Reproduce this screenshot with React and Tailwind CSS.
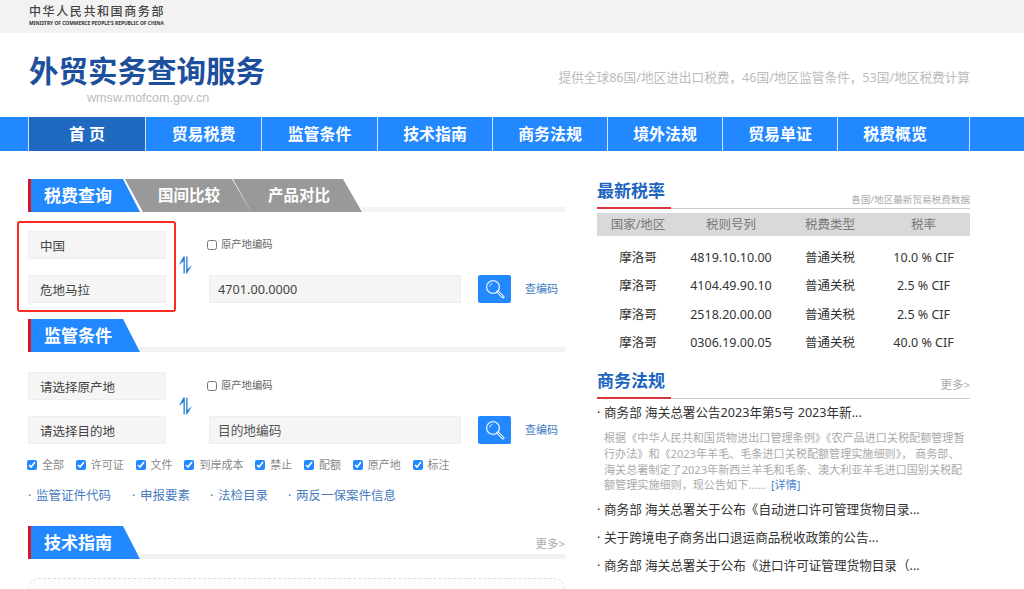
import React from 'react';

const font = { fontFamily: '"Noto Sans", "Noto Sans CJK SC", sans-serif' };

const navItems = [
  ['首 页', 'w-[117px] bg-[#1f69c1]'],
  ['贸易税费', 'w-[116px]'],
  ['监管条件', 'w-[116px]'],
  ['技术指南', 'w-[115px]'],
  ['商务法规', 'w-[115px]'],
  ['境外法规', 'w-[115px]'],
  ['贸易单证', 'w-[115px]'],
  ['税费概览', 'w-[133px] pr-[17px] border-r'],
];

const rates = [
  ['摩洛哥', '4819.10.10.00', '普通关税', '10.0 % CIF'],
  ['摩洛哥', '4104.49.90.10', '普通关税', '2.5 % CIF'],
  ['摩洛哥', '2518.20.00.00', '普通关税', '2.5 % CIF'],
  ['摩洛哥', '0306.19.00.05', '普通关税', '40.0 % CIF'],
];

const checks = ['全部', '许可证', '文件', '到岸成本', '禁止', '配额', '原产地', '标注'];
const links = [
  ['监管证件代码', 'w-[104px]'],
  ['申报要素', 'w-[78px]'],
  ['法检目录', 'w-[78px]'],
  ['两反一保案件信息', ''],
];

function SwapIcon() {
  return (
    <svg width="15" height="18" viewBox="0 0 15 18" fill="#1f7fd0">
      <path d="M5.5 0.5 L6.8 0.5 L6.8 17.5 L5.5 17.5 L5.5 5 L0.8 9 Z" />
      <path d="M8.2 0.5 L9.5 0.5 L9.5 13 L14.2 9 L8.9 17.5 L8.2 17.5 Z" />
    </svg>
  );
}

function SearchIcon() {
  return (
    <svg width="20" height="21" viewBox="0 0 20 21" fill="none" stroke="#dcecff">
      <circle cx="8" cy="8" r="6.4" strokeWidth="1.4" />
      <path d="M4.5 7.5 A3.8 3.8 0 0 1 7.5 4.4" strokeWidth="1" />
      <path d="M12.8 12.8 L18 18" strokeWidth="3" strokeLinecap="round" />
      <path d="M13.2 13.2 L17.6 17.6" strokeWidth="1" stroke="#2288ff" />
    </svg>
  );
}

function BlueTab({ children }) {
  return (
    <div className="w-[112px] h-[33px] border-l-[3px] border-[#d9161c] bg-[#2288ff] [clip-path:polygon(0_0,95px_0,100%_100%,0_100%)] pl-[13px] flex items-center text-[17px] font-bold text-white">
      {children}
    </div>
  );
}

function Band() {
  return <div className="flex-1 h-[5px] bg-[#f2f2f2] self-end" />;
}

function SelectBox({ children }) {
  return (
    <div className="h-[28px] bg-[#f5f5f5] border border-[#eeeeee] pl-[11px] pt-[4px] flex items-center text-[12.5px] text-[#444]">
      {children}
    </div>
  );
}

function QueryForm({ from, to, code, codeColor }) {
  return (
    <div className="grid grid-cols-[138px_43px_252px_17px_33px_14px_auto] grid-rows-[28px_28px] gap-y-[16px]">
      <SelectBox>{from}</SelectBox>
      <div className="row-span-2 flex items-center pl-[12px] pb-[5px]">
        <SwapIcon />
      </div>
      <label className="col-span-5 flex items-center gap-[4px] -ml-[2px] pb-[1px] text-[10.3px] text-[#666]">
        <input type="checkbox" className="w-[10px] h-[10px] m-0" />
        原产地编码
      </label>
      <SelectBox>{to}</SelectBox>
      <div className={`h-[28px] bg-[#f5f5f5] border border-[#eeeeee] pl-[8px] pt-[2px] flex items-center text-[12.7px] ${codeColor}`}>
        {code}
      </div>
      <div />
      <button className="w-[33px] h-[28px] bg-[#2288ff] rounded-[2px] flex items-center justify-center">
        <SearchIcon />
      </button>
      <div />
      <a className="text-[11px] text-[#3b7cc4] self-center">查编码</a>
    </div>
  );
}

function SideTitle({ title, right, rightClass }) {
  return (
    <div className="relative h-[30px] border-b border-[#c5ccd8] flex items-start justify-between">
      <span className="text-[17px] leading-[24px] font-bold text-[#1c66c0]">{title}</span>
      <span className={rightClass}>{right}</span>
      <div className="absolute left-0 -bottom-px w-[74px] h-[2px] bg-[#d9363e]" />
    </div>
  );
}

function NewsItem({ children }) {
  return (
    <div className="flex text-[12.6px] text-[#333] h-[28px] items-center">
      <span className="w-[7px] text-[#333]">·</span>
      <span>{children}</span>
    </div>
  );
}

export default function App() {
  return (
    <div className="h-[589px] w-[1024px] overflow-hidden bg-white" style={font}>
      <div className="h-[33px] bg-[#f2f2f2] pl-[29px] pt-[5px]">
        <div className="text-[12px] leading-[14px] tracking-[1.6px] font-medium text-[#444] whitespace-nowrap">中华人民共和国商务部</div>
        <div className="text-[4.9px] leading-[6px] mt-[1px] font-bold text-[#333] whitespace-nowrap">MINISTRY OF COMMERCE PEOPLE'S REPUBLIC OF CHINA</div>
      </div>

      <div className="h-[84px] pl-[29px] pr-[54px] flex justify-between">
        <div>
          <div className="text-[29.5px] leading-[40px] mt-[18px] font-bold text-[#1c4f9c] whitespace-nowrap">外贸实务查询服务</div>
          <div className="text-[12.6px] leading-[16px] -mt-[1px] ml-[58px] text-[#bbbbbb] font-['Liberation_Sans']">wmsw.mofcom.gov.cn</div>
        </div>
        <div className="text-[12.65px] leading-[18px] mt-[35px] text-[#bbbbbb]">提供全球86国/地区进出口税费，46国/地区监管条件，53国/地区税费计算</div>
      </div>

      <div className="h-[34px] bg-[#2288ff] pl-[28px] flex">
        {navItems.map(([label, cls]) => (
          <div key={label} className={`${cls} h-full border-l border-[#cfe3ff] pt-[2px] flex items-center justify-center text-[15.9px] font-bold text-white`}>
            {label}
          </div>
        ))}
      </div>

      <div className="flex pl-[28px] pt-[28px] gap-[32px]">
        <div className="w-[537px] shrink-0">
          <div className="flex">
            <BlueTab>税费查询</BlueTab>
            <div className="-ml-[15px] w-[126px] h-[33px] bg-[#999999] [clip-path:polygon(0_0,107px_0,100%_100%,18px_100%)] pl-[33px] flex items-center text-[15.5px] font-bold text-white">国间比较</div>
            <div className="-ml-[18px] w-[129px] h-[33px] bg-[#999999] [clip-path:polygon(0_0,110px_0,100%_100%,18px_100%)] pl-[35px] flex items-center text-[15.5px] font-bold text-white">产品对比</div>
            <Band />
          </div>

          <div className="relative mt-[19px]">
            <QueryForm from="中国" to="危地马拉" code="4701.00.0000" codeColor="text-[#444]" />
            <div className="absolute -left-[11px] -top-[10px] w-[159px] h-[91px] border-2 border-[#ff2a1f] rounded-[3px]" />
          </div>

          <div className="flex mt-[16px]">
            <BlueTab>监管条件</BlueTab>
            <Band />
          </div>

          <div className="mt-[20px]">
            <QueryForm from="请选择原产地" to="请选择目的地" code="目的地编码" codeColor="text-[#555]" />
          </div>

          <div className="flex mt-[15px] -ml-px h-[12px] gap-[11.8px] text-[11px] text-[#888]">
            {checks.map((c) => (
              <label key={c} className="flex items-center gap-[5px]">
                <input type="checkbox" defaultChecked className="w-[10px] h-[10px] m-0 accent-[#2288ff]" />
                {c}
              </label>
            ))}
          </div>

          <div className="flex mt-[15px] h-[20px] items-center text-[12.5px] text-[#4a7cc0]">
            {links.map(([t, w]) => (
              <a key={t} className={`${w} flex shrink-0`}>
                <span className="w-[8px]">·</span>
                {t}
              </a>
            ))}
          </div>

          <div className="flex mt-[20px]">
            <BlueTab>技术指南</BlueTab>
            <div className="flex-1 flex flex-col justify-end items-end">
              <span className="text-[11.5px] leading-[14px] text-[#aaaaaa] mb-[3px]">更多&gt;</span>
              <div className="w-full h-[5px] bg-[#f2f2f2]" />
            </div>
          </div>

          <div className="mt-[19px] h-[60px] border border-dashed border-[#dddddd] rounded-[10px] bg-[#fcfcfc]" />
        </div>

        <div className="w-[373px] shrink-0">
          <SideTitle title="最新税率" right="各国/地区最新贸易税费数据" rightClass="text-[9.6px] mt-[14px] leading-[14px] text-[#aaaaaa]" />
          <div className="grid grid-cols-[82px_104px_94px_93px] text-center mt-[4px]">
            {['国家/地区', '税则号列', '税费类型', '税率'].map((h) => (
              <div key={h} className="h-[23px] bg-[#d9d9d9] text-[12.5px] leading-[23px] text-[#777]">{h}</div>
            ))}
          </div>
          <div className="grid grid-cols-[82px_104px_94px_93px] auto-rows-[28.3px] text-center mt-[8px] text-[12.5px] leading-[28px] text-[#333]">
            {rates.flat().map((v, i) => (
              <div key={i}>{v}</div>
            ))}
          </div>

          <div className="mt-[12px]">
            <SideTitle title="商务法规" right="更多>" rightClass="text-[11.5px] mt-[9px] leading-[14px] text-[#aaaaaa]" />
          </div>
          <div>
            <NewsItem>商务部 海关总署公告2023年第5号 2023年新...</NewsItem>
          </div>
          <div className="pl-[7px] mt-[3px] text-[11.1px] leading-[15.7px] text-[#aaaaaa] whitespace-nowrap">
            <div>根据《中华人民共和国货物进出口管理条例》《农产品进口关税配额管理暂</div>
            <div>行办法》和《2023年羊毛、毛条进口关税配额管理实施细则》， 商务部、</div>
            <div>海关总署制定了2023年新西兰羊毛和毛条、澳大利亚羊毛进口国别关税配</div>
            <div>额管理实施细则，现公告如下...... <span className="ml-[2px] text-[#4a86d0]">[详情]</span></div>
          </div>
          <div className="mt-[3px]">
            <NewsItem>商务部 海关总署关于公布《自动进口许可管理货物目录...</NewsItem>
            <NewsItem>关于跨境电子商务出口退运商品税收政策的公告...</NewsItem>
            <NewsItem>商务部 海关总署关于公布《进口许可证管理货物目录（...</NewsItem>
          </div>
        </div>
      </div>
    </div>
  );
}
